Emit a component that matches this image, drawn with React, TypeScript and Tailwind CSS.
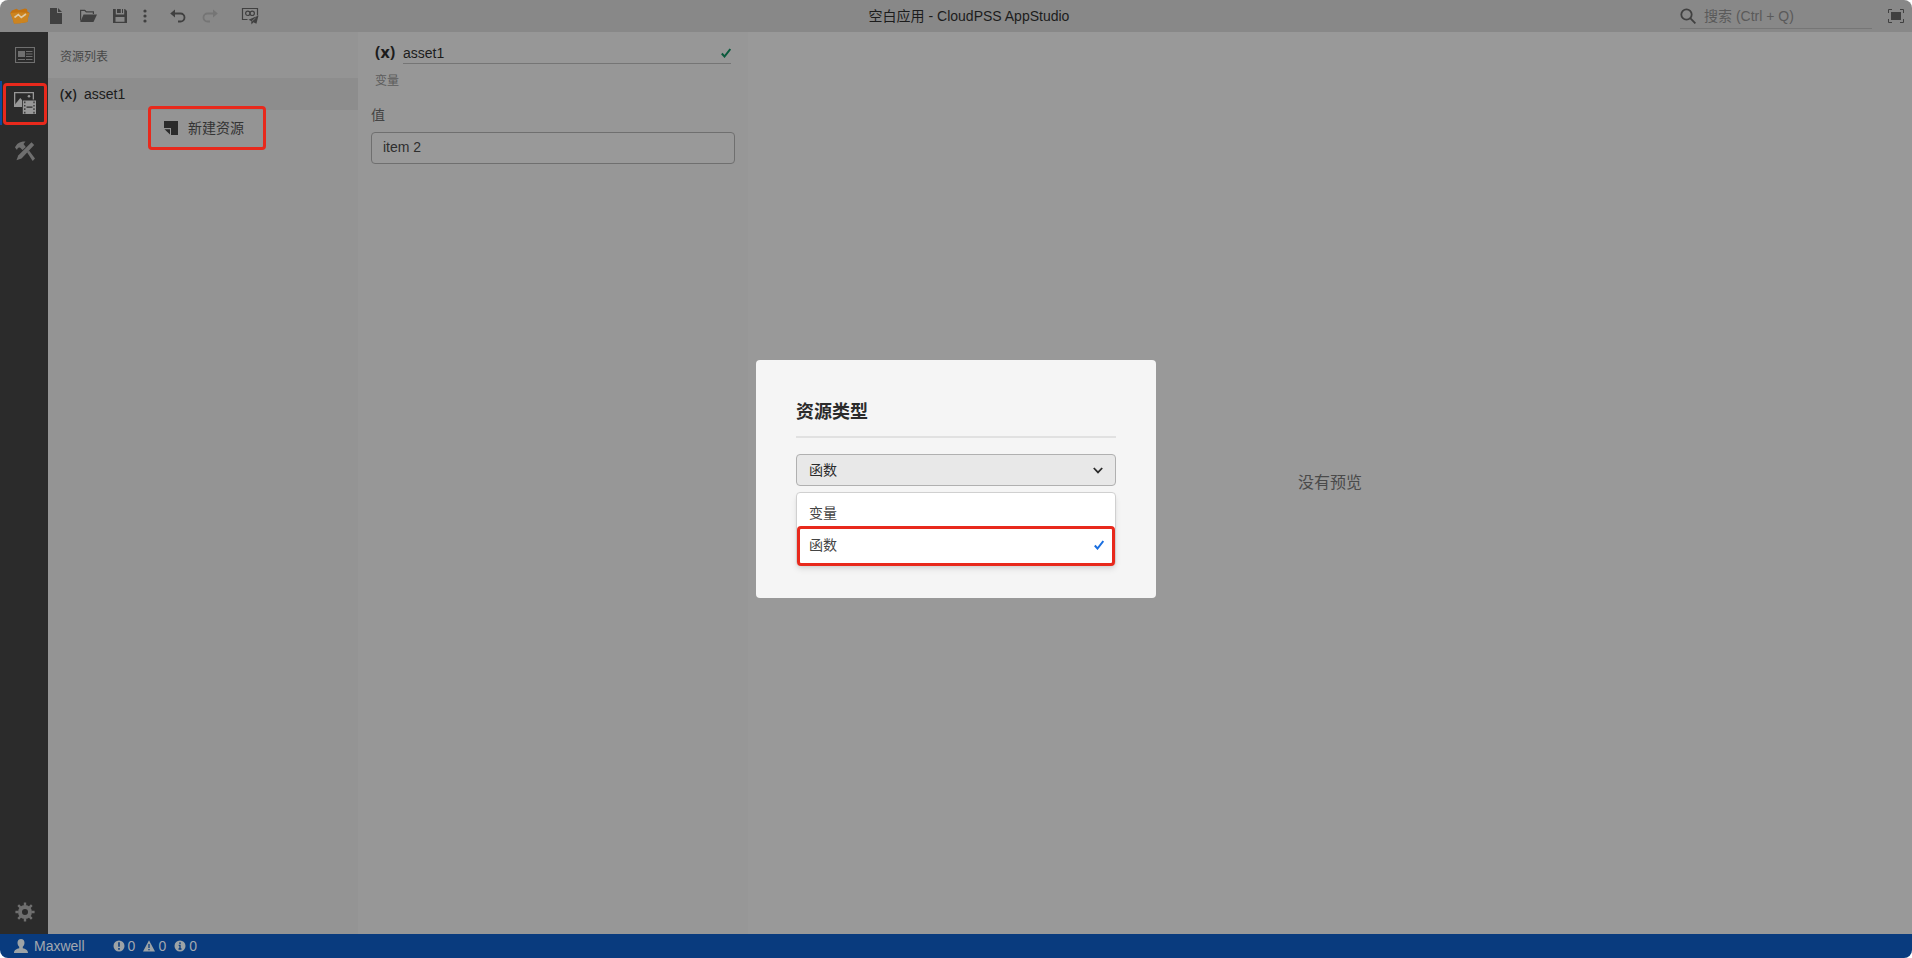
import type { ReactNode } from "react";

const problems = [
    { id: "errors", label: "错误", count: 0, icon: <ErrorIcon /> },
    { id: "warnings", label: "警告", count: 0, icon: <WarningIcon /> },
    { id: "infos", label: "信息", count: 0, icon: <InfoIcon /> },
];

const assetTypes = [
    { id: "variable", name: "变量" },
    { id: "function", name: "函数" },
];

function LogoIcon() {
    return (
        <svg width="20" height="16" viewBox="0 0 20 16">
            <path d="M2 2.500 6.500.8 9 2.200 15 .4 17 1l.4 2.500L19.600 5l-1.400 4-.8 5L10 15.200l-6 .4L2.400 10 .3 5z" fill="#c4720f" />
            <path d="M.3 5 10 4.200 19.600 5l-1.400 4-.8 5L10 15.200l-6 .4L2.400 10z" fill="#cc8420" />
            <path d="M4.500 9.500 8.300 6.500l3 3L16 6" fill="none" stroke="#ddc9a6" strokeWidth="1.600" />
        </svg>
    );
}

function NewFileIcon() {
    return (
        <svg width="12" height="16" viewBox="0 0 12 16" fill="#404040">
            <path d="M0 0h7v5h5v11H0z" />
            <path d="M8 0l4 4H8z" />
        </svg>
    );
}

function OpenIcon() {
    return (
        <svg width="17" height="14" viewBox="0 0 17 14" fill="#404040">
            <path d="M0 .8h5l1.500 1.500H14V5h-1.200V3.500H6L4.500 2H1.200v8L0 13z" />
            <path d="M3.500 5.500H17L13.500 13H.3z" />
        </svg>
    );
}

function SaveIcon() {
    return (
        <svg width="14" height="14" viewBox="0 0 14 14" fill="#404040" fillRule="evenodd">
            <path d="M0 0h2.800v5.500h8.400V0H12l2 2v12H0zM2.500 8v4.800h9V8z" />
            <path d="M4 0h3.800v4H4zM9 0h1v4H9z" />
        </svg>
    );
}

function MoreIcon() {
    return (
        <svg width="4" height="14" viewBox="0 0 4 14" fill="#404040">
            <circle cx="2" cy="2" r="1.600" />
            <circle cx="2" cy="7" r="1.600" />
            <circle cx="2" cy="12" r="1.600" />
        </svg>
    );
}

function UndoIcon() {
    return (
        <svg width="16" height="14" viewBox="0 0 16 14" fill="none" stroke="currentColor" strokeWidth="1.800">
            <path d="M2 4.500h8.500a4 4 0 0 1 0 8H8" />
            <path d="M5 .5V8.500L.2 4.500z" fill="currentColor" stroke="none" />
        </svg>
    );
}

function PublishIcon() {
    return (
        <svg width="18" height="18" viewBox="0 0 18 18" fill="none" stroke="#404040">
            <path d="M6.500 12.500h-5v-11h15v7" strokeWidth="1.200" />
            <circle cx="6.800" cy="6.300" r="2.200" strokeWidth="1.200" />
            <circle cx="11.200" cy="6.300" r="2.200" strokeWidth="1.200" />
            <path d="M17.500 8.500l-10 4.300 2.600 1.300.4 3.400 1.900-2.300 3 1.500z" fill="#404040" stroke="none" />
            <path d="M10.600 14.500l4-3.600" stroke="#888" strokeWidth=".7" />
        </svg>
    );
}

function SearchIcon() {
    return (
        <svg width="16" height="16" viewBox="0 0 16 16" fill="none" stroke="#404040" strokeWidth="1.800">
            <circle cx="6.500" cy="6.500" r="5.200" />
            <path d="M10.200 10.200 15.400 15.400" />
        </svg>
    );
}

function FullscreenIcon() {
    return (
        <svg width="16" height="14" viewBox="0 0 16 14" fill="none" stroke="#404040">
            <path d="M4 .5H.5V4M12 .5h3.500V4M4 13.500H.5V10M12 13.500h3.500V10" />
            <path d="M3 3h10v8H3z" fill="#404040" stroke="none" />
        </svg>
    );
}

function SceneIcon() {
    return (
        <svg width="20" height="16" viewBox="0 0 20 16" fill="none" stroke="#6f6f6f">
            <path d="M.5.5h19v15H.5z" strokeWidth="1.200" />
            <path d="M3 4h7v6H3z" fill="#6f6f6f" stroke="none" />
            <path d="M11 4.500h6.500M11 7h6.500M11 9.500h6.500M3 12.500h7M11 12.500h6.500" strokeWidth="1.200" />
        </svg>
    );
}

function AssetIcon() {
    return (
        <svg width="22" height="22" viewBox="0 0 22 22" fill="#989898">
            <path d="M0 0h20v7.500h-1.300V1.300H1.300V15H0z" />
            <path d="M1.300 12 6.300 6 8 8v7H0z" />
            <circle cx="15" cy="4.300" r="1.300" />
            <path d="M8.800 8.500H22V22H8.800z" />
            <path d="M10.800 9.500v12M20 9.500v12" fill="none" stroke="#2b2b2b" strokeWidth="1.200" strokeDasharray="1.700 1.700" />
            <path d="M12.500 15.200h6" stroke="#2b2b2b" strokeWidth="1.300" />
        </svg>
    );
}

function ToolsIcon() {
    return (
        <svg width="20" height="20" viewBox="0 0 20 20" fill="#6f6f6f">
            <path d="M0 6.500C1.500 3 4.500.3 10.500.5L8.500 3l2.300 3L7.500 9 5.200 6.800C3.500 6 2.500 6.800 2 9z" />
            <path d="M12 11.200 14 9.500l6 8L17.700 20z" />
            <path d="M16.500 1.200 19.200 4 6.500 17.500l-5 1.700L3.200 14.500z" />
        </svg>
    );
}

function GearIcon() {
    return (
        <svg width="20" height="20" viewBox="0 0 20 20" fill="none" stroke="#6f6f6f">
            <circle cx="10" cy="10" r="5" strokeWidth="4" />
            <path
                d="M10 .4v3M10 16.600v3M.4 10h3M16.600 10h3M3.200 3.200l2.200 2.200M14.600 14.600l2.200 2.200M3.200 16.800l2.200-2.200M14.600 5.400l2.200-2.200"
                strokeWidth="2.400"
            />
        </svg>
    );
}

function NewAssetIcon() {
    return (
        <svg width="14" height="14" viewBox="0 0 14 14" fill="#2b2b2b">
            <path d="M0 0h14v14H7V7H0z" />
            <path d="M.5 8.200H6V13.500z" />
        </svg>
    );
}

function CheckIcon({ className }: { className: string }) {
    return (
        <svg width="10" height="10" viewBox="0 0 10 10" fill="none" stroke="currentColor" strokeWidth="2" className={className}>
            <path d="M.8 5.500 3.500 8.500 9.300 1" />
        </svg>
    );
}

function UserIcon() {
    return (
        <svg width="14" height="14" viewBox="0 0 14 14" fill="#9da3a6">
            <path d="M7 0c2.200 0 3.500 1.600 3.500 3.700 0 1.700-.7 3.200-1.700 4v1.500c2.500.8 5.200 1.500 5.200 4.800H0c0-3.300 2.700-4 5.200-4.800V7.700c-1-.8-1.700-2.300-1.700-4C3.500 1.600 4.800 0 7 0z" />
        </svg>
    );
}

function ErrorIcon() {
    return (
        <svg width="12" height="12" viewBox="0 0 12 12" fill="#9da3a6">
            <circle cx="6" cy="6" r="5.500" />
            <path d="M6 2.300v4.500M6 8v1.700" stroke="#093b7e" strokeWidth="1.600" />
        </svg>
    );
}

function WarningIcon() {
    return (
        <svg width="12" height="12" viewBox="0 0 12 12" fill="#9da3a6">
            <path d="M6 .3 12 11.500H0z" />
            <path d="M6 4v4M6 9v1.300" stroke="#093b7e" strokeWidth="1.300" />
        </svg>
    );
}

function InfoIcon() {
    return (
        <svg width="12" height="12" viewBox="0 0 12 12" fill="#9da3a6">
            <circle cx="6" cy="6" r="5.500" />
            <path d="M6 2.300v1.600M4.700 5.300H6v4M4.500 9h3" fill="none" stroke="#093b7e" strokeWidth="1.300" />
        </svg>
    );
}

function ToolButton({ label, wide = true, children }: { label: string; wide?: boolean; children: ReactNode }) {
    return (
        <button aria-label={label} className={`${wide ? "w-8" : "w-4.5"} h-8 flex items-center justify-center`}>
            {children}
        </button>
    );
}

function RailButton({ label, active = false, children }: { label: string; active?: boolean; children: ReactNode }) {
    return (
        <button
            aria-label={label}
            className={`relative h-11 w-full flex items-center justify-center border-l-2 ${active ? "border-[#0c4a9c]" : "border-transparent"}`}
        >
            {children}
            {active && <span className="absolute top-0.5 bottom-0 left-px right-px border-3 border-[#e8291c] rounded"></span>}
        </button>
    );
}

function TopBar() {
    return (
        <header className="h-8 flex items-center bg-[#888888]">
            <div className="flex items-center">
                <div className="w-10 flex justify-center">
                    <LogoIcon />
                </div>
                <ToolButton label="新建"><NewFileIcon /></ToolButton>
                <ToolButton label="打开"><OpenIcon /></ToolButton>
                <ToolButton label="保存"><SaveIcon /></ToolButton>
                <ToolButton label="更多" wide={false}><MoreIcon /></ToolButton>
                <div className="flex ml-2 text-[#404040]">
                    <ToolButton label="撤销"><UndoIcon /></ToolButton>
                    <div className="-scale-x-100 text-[#757575]">
                        <ToolButton label="重做"><UndoIcon /></ToolButton>
                    </div>
                </div>
                <div className="ml-2">
                    <ToolButton label="发布"><PublishIcon /></ToolButton>
                </div>
            </div>
            <h1 className="flex-1 text-center text-sm text-[#1c1c1c]">空白应用 - CloudPSS AppStudio</h1>
            <div className="pl-2 flex items-center gap-2">
                <label className="w-48 h-[26px] flex items-center gap-2 border-b border-[#767676]">
                    <SearchIcon />
                    <input
                        type="text"
                        aria-label="搜索"
                        placeholder="搜索 (Ctrl + Q)"
                        className="flex-1 min-w-0 text-sm bg-transparent outline-none placeholder:text-[#5a5a5a]"
                    />
                </label>
                <ToolButton label="全屏"><FullscreenIcon /></ToolButton>
            </div>
        </header>
    );
}

function AssetList() {
    return (
        <aside className="w-[310px] shrink-0 bg-[#949494]">
            <h2 className="h-[46px] pl-3 pt-1 flex items-center text-xs text-[#484848]">资源列表</h2>
            <ul>
                <li className="h-8 pl-3 flex items-center gap-2 bg-[#8d8d8d] text-sm text-[#1c1c1c]">
                    <span className="w-4 font-['Open_Sans',sans-serif] font-semibold">(x)</span>
                    asset1
                </li>
            </ul>
            <div className="flex justify-center pt-0.5 pl-0.5">
                <button className="relative h-8 flex items-center gap-2.5 text-sm text-[#333333]">
                    <NewAssetIcon />
                    新建资源
                    <span className="absolute -inset-y-1.5 -left-4 -right-[22px] border-3 border-[#e8291c] rounded"></span>
                </button>
            </div>
        </aside>
    );
}

function AssetEditor() {
    return (
        <section className="w-[390px] shrink-0 px-[13px] pt-2 bg-[#979797]">
            <div className="flex items-center gap-2 pl-1 pr-1">
                <span className="w-5 text-base leading-6 font-bold font-['Open_Sans',sans-serif] text-[#1c1c1c]">(x)</span>
                <div className="flex-1 h-6 pt-0.5 flex items-center border-b border-[#757575]">
                    <input
                        aria-label="名称"
                        defaultValue="asset1"
                        className="flex-1 min-w-0 text-sm text-[#1c1c1c] bg-transparent outline-none"
                    />
                    <CheckIcon className="text-[#0b5a3d]" />
                </div>
            </div>
            <p className="mt-[7px] pl-1 text-xs leading-5 text-[#5c5c5c]">变量</p>
            <label htmlFor="value" className="block mt-3 text-sm leading-6 text-[#444444]">值</label>
            <input
                id="value"
                defaultValue="item 2"
                className="mt-[5px] w-full h-8 px-[11px] pb-0.5 text-sm text-[#2e2e2e] bg-[#999999] border border-[#6f6f6f] rounded outline-none"
            />
        </section>
    );
}

function AssetTypeDialog() {
    return (
        <div className="absolute inset-0 flex items-center justify-center">
            <div role="dialog" aria-labelledby="dialog-title" className="w-[400px] px-10 pt-10 pb-28 bg-[#f5f5f5] rounded">
                <h2 id="dialog-title" className="pb-3 text-lg leading-6 font-bold text-[#2b2b2b] border-b-2 border-[#e1e1e1]">
                    资源类型
                </h2>
                <div className="relative mt-4">
                    <select
                        aria-label="资源类型"
                        defaultValue="function"
                        className="block w-full h-8 px-3 text-sm text-[#2b2b2b] bg-[#e8e8e8] border border-[#b0b0b0] rounded appearance-none outline-none"
                    >
                        {assetTypes.map((type) => (
                            <option key={type.id} value={type.id}>{type.name}</option>
                        ))}
                    </select>
                    <svg width="10" height="7" viewBox="0 0 10 7" fill="none" stroke="#2b2b2b" strokeWidth="1.800" className="absolute right-[13px] top-[13px]">
                        <path d="M.8 1 5 5.400 9.200 1" />
                    </svg>

                    {/* Opened options */}
                    <ul
                        role="listbox"
                        className="absolute inset-x-0 top-full mt-1.5 py-1 bg-white border border-[#d0d0d0] rounded shadow-md text-sm text-[#444444]"
                    >
                        {assetTypes.map((type) => (
                            <li
                                key={type.id}
                                role="option"
                                aria-selected={type.id === "function"}
                                className="relative h-8 pl-3 pr-[11px] flex items-center justify-between"
                            >
                                {type.name}
                                {type.id === "function" && (
                                    <>
                                        <CheckIcon className="text-[#1a6fe0]" />
                                        <span className="absolute -top-[3px] -bottom-[5px] left-0 right-0 border-3 border-[#e8291c] rounded"></span>
                                    </>
                                )}
                            </li>
                        ))}
                    </ul>
                </div>
            </div>
        </div>
    );
}

export default function App() {
    return (
        <div className="bg-white">
            <div className="relative min-h-screen flex flex-col rounded-lg overflow-hidden font-['Liberation_Sans','Noto_Sans_CJK_SC',sans-serif]">
                <TopBar />
                <main className="flex-1 flex">
                    <nav className="w-12 shrink-0 pt-px flex flex-col gap-1 bg-[#2b2b2b]">
                        <RailButton label="场景"><SceneIcon /></RailButton>
                        <RailButton label="资源" active><AssetIcon /></RailButton>
                        <RailButton label="工具"><ToolsIcon /></RailButton>
                        <div className="mt-auto">
                            <RailButton label="设置"><GearIcon /></RailButton>
                        </div>
                    </nav>
                    <AssetList />
                    <AssetEditor />
                    <section className="flex-1 flex items-center justify-center bg-[#999999] text-base text-[#4a4a4a]">
                        没有预览
                    </section>
                </main>
                <footer className="h-6 pl-3.5 flex items-center bg-[#093b7e] text-sm text-[#a2a8b0]">
                    <UserIcon />
                    <span className="ml-1.5">Maxwell</span>
                    <div className="ml-7 flex gap-2">
                        {problems.map((problem) => (
                            <span key={problem.id} title={problem.label} className="flex items-center gap-[3px]">
                                {problem.icon}
                                {problem.count}
                            </span>
                        ))}
                    </div>
                </footer>
                <AssetTypeDialog />
            </div>
        </div>
    );
}
